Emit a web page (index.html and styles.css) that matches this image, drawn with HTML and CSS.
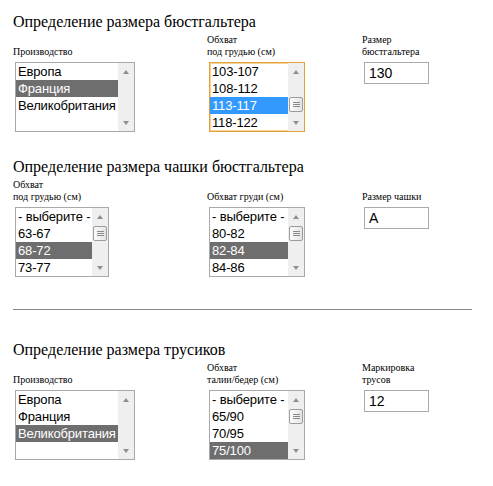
FILE: index.html
```html
<!DOCTYPE html>
<html lang="ru">
<head>
  <meta charset="UTF-8">
  <meta name="viewport" content="width=device-width, initial-scale=1.0">
  <title>Определение размера</title>
  <link rel="stylesheet" href="styles.css">
</head>
<body>
  <div class="page">
    <section class="calc">
      <h2 class="calc-title">Определение размера бюстгальтера</h2>
      <div class="calc-row">
        <div class="field-label">Производство</div>
        <div class="field-label">Обхват<br>под грудью (см)</div>
        <div class="field-label">Размер<br>бюстгальтера</div>

        <div class="listbox listbox-wide">
          <div class="options">
            <div class="option">Европа</div>
            <div class="option selected">Франция</div>
            <div class="option">Великобритания</div>
          </div>
          <div class="scrollbar">
            <div class="arrow arrow-up"></div>
            <div class="track"></div>
            <div class="arrow arrow-down"></div>
          </div>
        </div>

        <div class="listbox listbox-focus">
          <div class="options">
            <div class="option">103-107</div>
            <div class="option">108-112</div>
            <div class="option active">113-117</div>
            <div class="option">118-122</div>
          </div>
          <div class="scrollbar">
            <div class="arrow arrow-up"></div>
            <div class="track"><div class="thumb thumb-mid"></div></div>
            <div class="arrow arrow-down"></div>
          </div>
        </div>

        <input class="result" type="text" value="130">
      </div>
    </section>

    <section class="calc">
      <h2 class="calc-title">Определение размера чашки бюстгальтера</h2>
      <div class="calc-row">
        <div class="field-label">Обхват<br>под грудью (см)</div>
        <div class="field-label">Обхват груди (см)</div>
        <div class="field-label">Размер чашки</div>

        <div class="listbox listbox-narrow">
          <div class="options">
            <div class="option">- выберите -</div>
            <div class="option">63-67</div>
            <div class="option selected">68-72</div>
            <div class="option">73-77</div>
          </div>
          <div class="scrollbar">
            <div class="arrow arrow-up"></div>
            <div class="track"><div class="thumb thumb-top"></div></div>
            <div class="arrow arrow-down"></div>
          </div>
        </div>

        <div class="listbox">
          <div class="options">
            <div class="option">- выберите -</div>
            <div class="option">80-82</div>
            <div class="option selected">82-84</div>
            <div class="option">84-86</div>
          </div>
          <div class="scrollbar">
            <div class="arrow arrow-up"></div>
            <div class="track"><div class="thumb thumb-top"></div></div>
            <div class="arrow arrow-down"></div>
          </div>
        </div>

        <input class="result" type="text" value="A">
      </div>
    </section>

    <hr class="divider">

    <section class="calc">
      <h2 class="calc-title">Определение размера трусиков</h2>
      <div class="calc-row">
        <div class="field-label">Производство</div>
        <div class="field-label">Обхват<br>талии/бедер (см)</div>
        <div class="field-label">Маркировка<br>трусов</div>

        <div class="listbox listbox-wide">
          <div class="options">
            <div class="option">Европа</div>
            <div class="option">Франция</div>
            <div class="option selected">Великобритания</div>
          </div>
          <div class="scrollbar">
            <div class="arrow arrow-up"></div>
            <div class="track"></div>
            <div class="arrow arrow-down"></div>
          </div>
        </div>

        <div class="listbox">
          <div class="options">
            <div class="option">- выберите -</div>
            <div class="option">65/90</div>
            <div class="option">70/95</div>
            <div class="option selected">75/100</div>
          </div>
          <div class="scrollbar">
            <div class="arrow arrow-up"></div>
            <div class="track"><div class="thumb thumb-top"></div></div>
            <div class="arrow arrow-down"></div>
          </div>
        </div>

        <input class="result" type="text" value="12">
      </div>
    </section>
  </div>
</body>
</html>
```

FILE: styles.css
```css
body {
  margin: 0;
  background: #fff;
  color: #000;
  font-family: 'Liberation Serif', 'Times New Roman', serif;
}
.page {
  padding: 13px 0 0 13px;
}
.calc-title {
  font-size: 16px;
  font-weight: normal;
  margin: 0 0 3px;
}
.calc + .calc {
  margin-top: 26px;
}
.calc-row {
  display: grid;
  grid-template-columns: 194px 155px auto;
}
.field-label {
  align-self: end;
  font-size: 10px;
  line-height: 12px;
  margin-bottom: 4px;
}
.listbox {
  display: flex;
  width: 96px;
  height: 70px;
  box-sizing: border-box;
  margin-left: 2px;
  border: 1px solid #a9a9a9;
  font-family: 'Liberation Sans', Arial, sans-serif;
  font-size: 13px;
  line-height: 17px;
  letter-spacing: -0.15px;
  background: #fff;
}
.listbox-wide {
  width: 120px;
}
.listbox-narrow {
  width: 94px;
}
.listbox-focus {
  border-color: #e1a23c;
  box-shadow: inset 0 0 0 1px #f4d199;
}
.options {
  flex: 1;
  overflow: hidden;
}
.option {
  height: 17px;
  padding-left: 2px;
  white-space: nowrap;
}
.option.selected {
  background: #6e6e6e;
  color: #fff;
}
.option.active {
  background: #3399ff;
  color: #fff;
}
.scrollbar {
  width: 16px;
  display: flex;
  flex-direction: column;
  background: #efefef;
}
.arrow {
  height: 17px;
  display: flex;
  align-items: center;
  justify-content: center;
}
.arrow::after {
  content: '';
  width: 0;
  height: 0;
  border-left: 3px solid transparent;
  border-right: 3px solid transparent;
}
.arrow-up::after {
  border-bottom: 4px solid #8f8f8f;
}
.arrow-down::after {
  border-top: 4px solid #8f8f8f;
}
.track {
  flex: 1;
}
.thumb {
  height: 15px;
  margin: 0 1px;
  box-sizing: border-box;
  border: 1px solid #9c9c9c;
  border-radius: 2px;
  background: linear-gradient(to right, #fdfdfd, #e4e4e4);
  display: flex;
  align-items: center;
  justify-content: center;
}
.thumb::after {
  content: '';
  width: 7px;
  height: 5px;
  background: repeating-linear-gradient(#8a8a8a 0 1px, transparent 1px 2px);
}
.thumb-top {
  margin-top: 1px;
}
.thumb-mid {
  margin-top: 17px;
}
.result {
  width: 65px;
  height: 22px;
  box-sizing: border-box;
  margin: 0 0 0 2px;
  padding: 0 4px;
  border: 1px solid #ababab;
  font-family: 'Liberation Sans', Arial, sans-serif;
  font-size: 14px;
  color: #000;
  outline: none;
}
.divider {
  height: 0;
  margin: 32px 21px 31px 0;
  border: none;
  border-top: 1px solid #888;
}
```
